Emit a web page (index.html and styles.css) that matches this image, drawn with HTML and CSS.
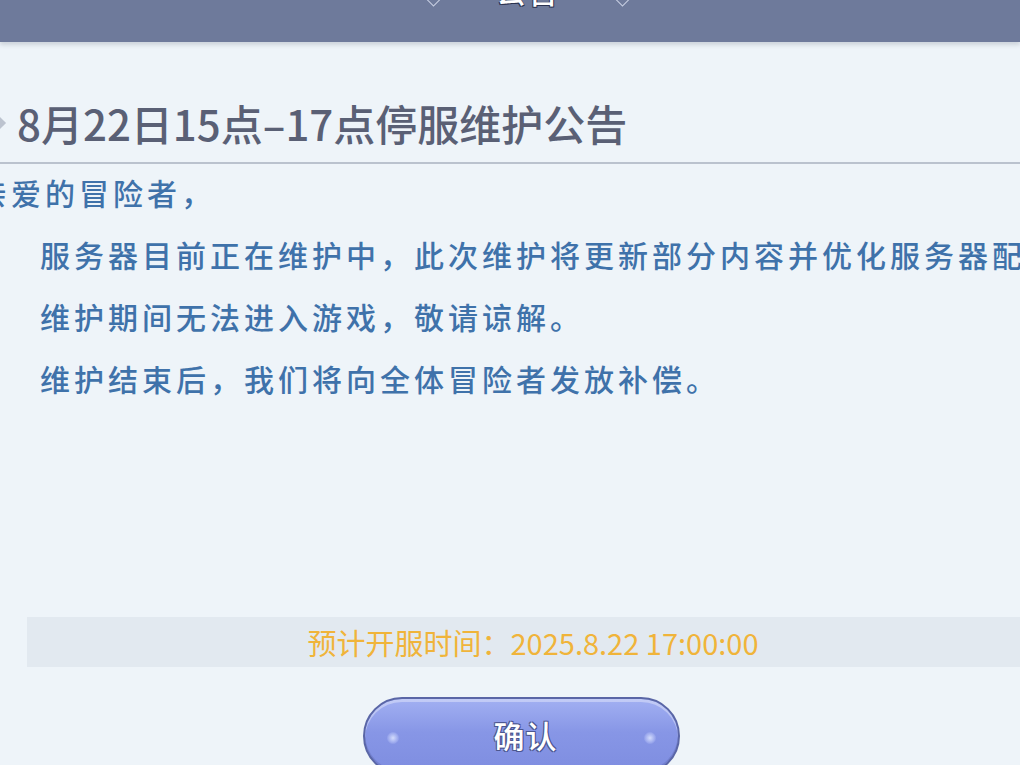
FILE: index.html
```html
<!DOCTYPE html>
<html lang="zh-CN">
<head>
<meta charset="utf-8">
<title>公告</title>
<link rel="stylesheet" href="styles.css">
</head>
<body>
<div class="screen">
  <header class="topbar">
    <span class="deco"></span>
    <span class="tb-title">公告</span>
    <span class="deco"></span>
  </header>
  <main class="panel">
    <h1 class="headline"><span class="bullet"></span>8月22日15点–17点停服维护公告</h1>
    <div class="divider"></div>
    <div class="body">
      <p class="greet">亲爱的冒险者，</p>
      <p class="line">服务器目前正在维护中，此次维护将更新部分内容并优化服务器配置。</p>
      <p class="line">维护期间无法进入游戏，敬请谅解。</p>
      <p class="line">维护结束后，我们将向全体冒险者发放补偿。</p>
    </div>
    <div class="opentime">预计开服时间：2025.8.22 17:00:00</div>
    <button class="confirm"><span class="spark"></span><span class="btn-text">确认</span><span class="spark"></span></button>
  </main>
</div>
</body>
</html>
```

FILE: styles.css
```css
html, body {
  margin: 0;
  padding: 0;
  background: #eef4f9;
}

.screen {
  width: 1020px;
  height: 765px;
  overflow: hidden;
  background: #eef4f9;
  font-family: "Noto Sans CJK SC", "Noto Sans", sans-serif;
}

.topbar {
  height: 42px;
  background: #6e7a9b;
  box-shadow: 0 3px 4px rgba(60, 70, 90, 0.18);
  display: flex;
  justify-content: center;
  align-items: flex-start;
  gap: 56px;
  padding-left: 36px;
  position: relative;
  z-index: 1;
}

.tb-title {
  font-size: 30px;
  line-height: 32px;
  margin-top: -26px;
  color: #ffffff;
  font-weight: 500;
  letter-spacing: 2px;
  text-shadow: 0 0 1px #2c3350, 1px 1px 0 #2c3350, -1px 1px 0 #2c3350;
}

.deco {
  width: 11px;
  height: 11px;
  border: 1.5px solid rgba(230, 235, 250, 0.75);
  transform: rotate(45deg);
  margin-top: -9px;
}

.panel {
  display: flex;
  flex-direction: column;
}

.headline {
  margin: 0;
  padding: 56px 0 14px 0;
  height: 50px;
  line-height: 50px;
  font-size: 42px;
  font-weight: 500;
  color: #5a6075;
  white-space: nowrap;
  display: flex;
  align-items: center;
}

.bullet {
  display: inline-block;
  width: 10px;
  height: 10px;
  background: #bcc3cf;
  transform: rotate(45deg);
  margin-left: -6px;
  margin-right: 13px;
}

.divider {
  height: 2px;
  background: #bac2ce;
}

.body {
  margin-top: -3px;
  color: #3f72aa;
  font-size: 30px;
  letter-spacing: 4px;
  font-weight: 500;
}

.body p {
  margin: 0;
  line-height: 62px;
  white-space: nowrap;
}

.greet {
  text-indent: -23px;
}

.line {
  padding-left: 40px;
}

.opentime {
  margin-top: 208px;
  margin-left: 27px;
  width: 1012px;
  flex: none;
  height: 50px;
  line-height: 50px;
  background: #e2e9f0;
  color: #f0b43a;
  font-size: 29px;
  text-align: center;
  white-space: nowrap;
}

.confirm {
  margin-top: 30px;
  margin-left: 363px;
  width: 317px;
  height: 78px;
  flex: none;
  border: 2px solid #5a66a6;
  border-radius: 40px;
  background: linear-gradient(180deg, #a2b0f2 0%, #8796e6 45%, #7e8de0 100%);
  box-shadow: inset 0 3px 0 rgba(255, 255, 255, 0.35), inset 0 -2px 0 rgba(70, 80, 150, 0.25);
  display: flex;
  align-items: center;
  justify-content: space-between;
  padding: 0 22px 4px 22px;
  box-sizing: border-box;
  font-family: "Noto Sans CJK SC", sans-serif;
}

.btn-text {
  font-size: 31px;
  font-weight: 500;
  color: #ffffff;
  letter-spacing: 1px;
  text-shadow: 1px 1px 0 #4b5690, -1px 1px 0 #4b5690, 1px -1px 0 #4b5690, -1px -1px 0 #4b5690;
  margin-left: 8px;
}

.spark {
  width: 12px;
  height: 12px;
  background: radial-gradient(circle, rgba(220, 228, 255, 0.9) 0%, rgba(200, 210, 255, 0.3) 60%, rgba(200, 210, 255, 0) 75%);
  transform: rotate(45deg);
  margin-top: 8px;
}
```
